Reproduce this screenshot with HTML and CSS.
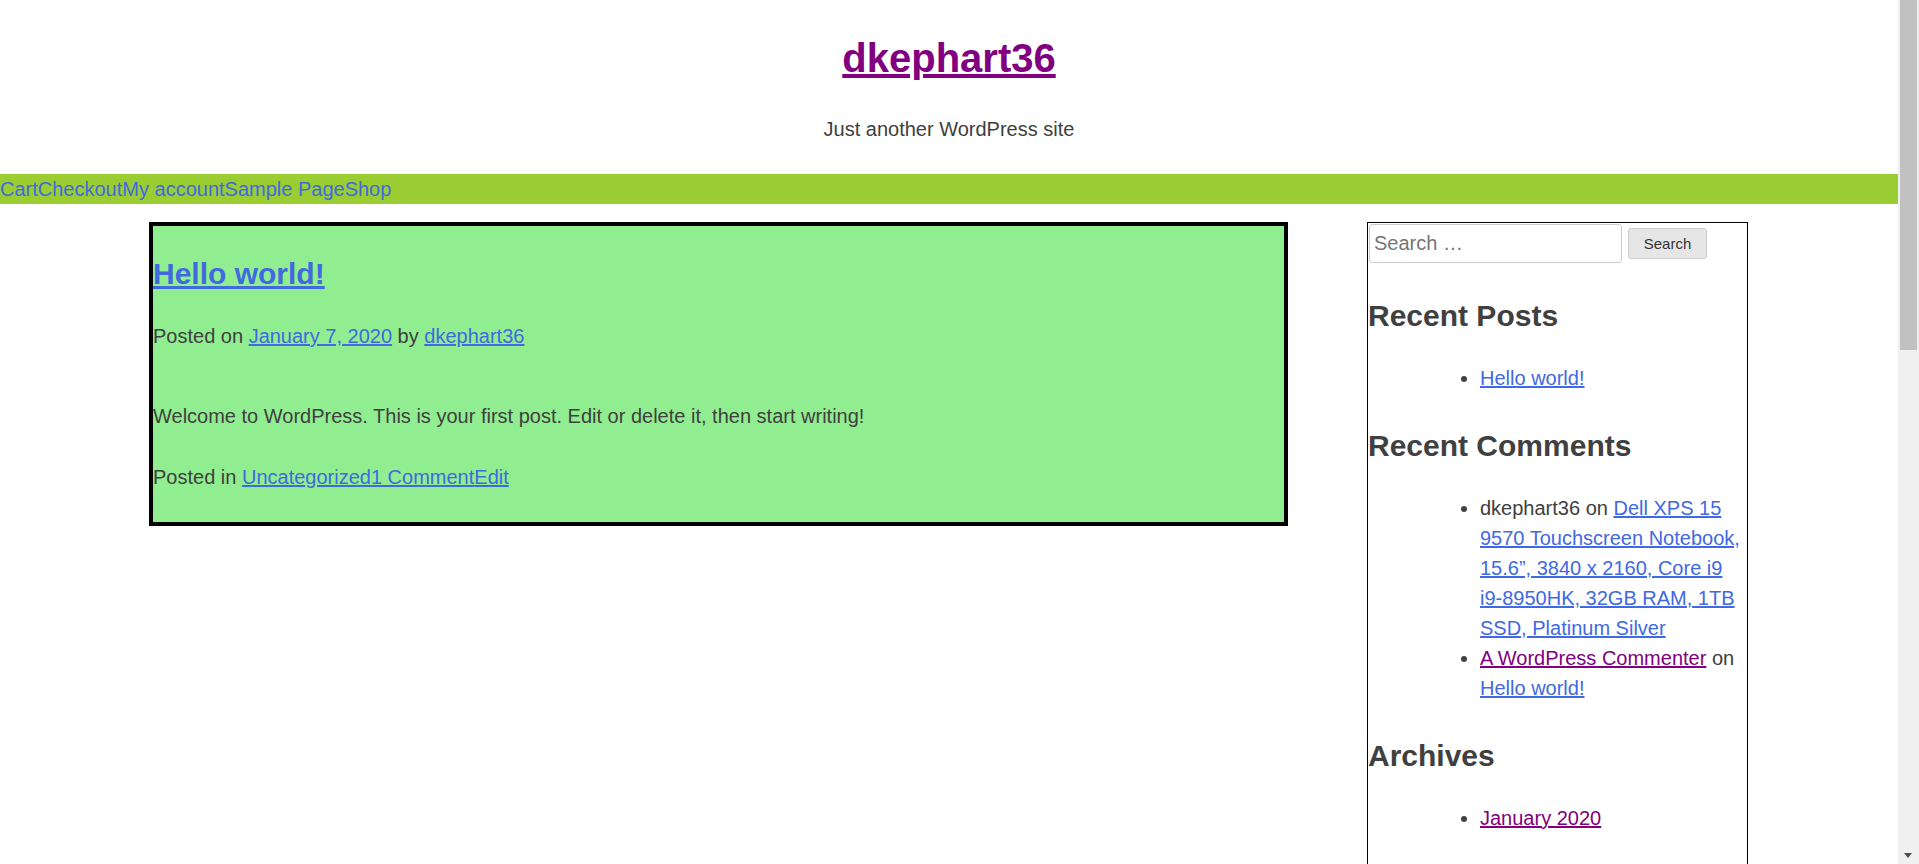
FILE: index.html
```html
<!DOCTYPE html>
<html lang="en">
<head>
<meta charset="utf-8">
<title>dkephart36 – Just another WordPress site</title>
<link rel="stylesheet" href="styles.css">
</head>
<body>
<div class="page">
  <header class="site-header">
    <p class="site-title"><a class="visited" href="#">dkephart36</a></p>
    <p class="site-description">Just another WordPress site</p>
    <nav class="main-nav">
      <a href="#">Cart</a><a href="#">Checkout</a><a href="#">My account</a><a href="#">Sample Page</a><a href="#">Shop</a>
    </nav>
  </header>

  <div class="content">
    <main class="site-main">
      <article class="post">
        <header class="entry-header">
          <h2 class="entry-title"><a href="#">Hello world!</a></h2>
          <div class="entry-meta">Posted on <a href="#">January 7, 2020</a> by <a href="#">dkephart36</a></div>
        </header>
        <div class="entry-content">
          <p>Welcome to WordPress. This is your first post. Edit or delete it, then start writing!</p>
        </div>
        <footer class="entry-footer">Posted in <a href="#">Uncategorized</a><a href="#">1 Comment</a><a href="#">Edit</a></footer>
      </article>
    </main>

    <aside class="sidebar">
      <form class="search-form">
        <input class="search-field" type="search" placeholder="Search …">
        <button class="search-submit" type="button">Search</button>
      </form>

      <section class="widget">
        <h2 class="widget-title">Recent Posts</h2>
        <ul>
          <li><a href="#">Hello world!</a></li>
        </ul>
      </section>

      <section class="widget">
        <h2 class="widget-title">Recent Comments</h2>
        <ul>
          <li>dkephart36 on <a href="#">Dell XPS 15 9570 Touchscreen Notebook, 15.6”, 3840 x 2160, Core i9 i9-8950HK, 32GB RAM, 1TB SSD, Platinum Silver</a></li>
          <li><a class="visited" href="#">A WordPress Commenter</a> on <a href="#">Hello world!</a></li>
        </ul>
      </section>

      <section class="widget">
        <h2 class="widget-title">Archives</h2>
        <ul>
          <li><a class="visited" href="#">January 2020</a></li>
        </ul>
      </section>
    </aside>
  </div>
</div>

<div class="scrollbar">
  <div class="scroll-thumb"></div>
  <div class="scroll-arrow"></div>
</div>
</body>
</html>
```

FILE: styles.css
```css
html {
  overflow: hidden;
}

body {
  margin: 0;
  font-family: "Liberation Sans", Arial, sans-serif;
  font-size: 20px;
  line-height: 30px;
  color: #404040;
  background: #fff;
}

a {
  color: #4169e1;
}

a.visited {
  color: #800080;
}

.page {
  margin-right: 21px;
}

/* Header */
.site-header {
  padding-top: 28px;
  text-align: center;
}

.site-title {
  margin: 0;
  font-size: 40px;
  line-height: 60px;
  font-weight: bold;
}

.site-description {
  margin: 26px 0 30px;
}

.main-nav {
  background: #9acd32;
  text-align: left;
  height: 30px;
}

.main-nav a {
  text-decoration: none;
}

/* Content */
.content {
  display: flex;
  justify-content: space-between;
  align-items: flex-start;
  margin: 18px 150px 0 149px;
}

.site-main {
  width: 1139px;
}

.post {
  box-sizing: border-box;
  width: 1139px;
  background: #90ee90;
  border: 4px solid #000;
}

.entry-title {
  margin: 25px 0;
  font-size: 30px;
  line-height: 45px;
  font-weight: bold;
}

.entry-meta {
  margin-bottom: 50px;
}

.entry-content p {
  margin: 0 0 31px;
}

.entry-footer {
  margin-bottom: 30px;
}

/* Sidebar */
.sidebar {
  box-sizing: border-box;
  width: 381px;
  border: 1px solid #000;
  padding-bottom: 60px;
}

.search-form {
  display: flex;
  align-items: center;
  gap: 6px;
  padding: 1px 0 0 1px;
  margin: 0 0 30px;
}

.search-field {
  box-sizing: border-box;
  width: 253px;
  height: 39px;
  margin: 0;
  padding: 0 4px;
  border: 1px solid #ccc;
  border-radius: 3px;
  font-family: "Liberation Sans", Arial, sans-serif;
  font-size: 20px;
  color: #404040;
  background: #fff;
  outline: none;
}

.search-field::placeholder {
  color: #757575;
}

.search-submit {
  box-sizing: border-box;
  width: 79px;
  height: 31px;
  margin: 0;
  padding: 0;
  border: 1px solid #ccc;
  border-radius: 3px;
  background: #e6e6e6;
  font-family: "Liberation Sans", Arial, sans-serif;
  font-size: 15px;
  color: #333;
}

.widget {
  margin-bottom: 30px;
}

.widget-title {
  margin: 0 0 25px;
  font-size: 30px;
  line-height: 45px;
  font-weight: bold;
  color: #404040;
}

.widget ul {
  margin: 0;
  padding-left: 112px;
  list-style: disc;
}

/* Fake window scrollbar (overlay) */
.scrollbar {
  position: fixed;
  top: 0;
  right: 0;
  width: 21px;
  height: 100%;
  background: #f0f0f0;
}

.scroll-thumb {
  position: absolute;
  top: 0;
  left: 2px;
  width: 17px;
  height: 350px;
  background: #c1c1c1;
}

.scroll-arrow {
  position: absolute;
  bottom: 6px;
  left: 6px;
  width: 0;
  height: 0;
  border-left: 4.5px solid transparent;
  border-right: 4.5px solid transparent;
  border-top: 5px solid #505050;
}
```
